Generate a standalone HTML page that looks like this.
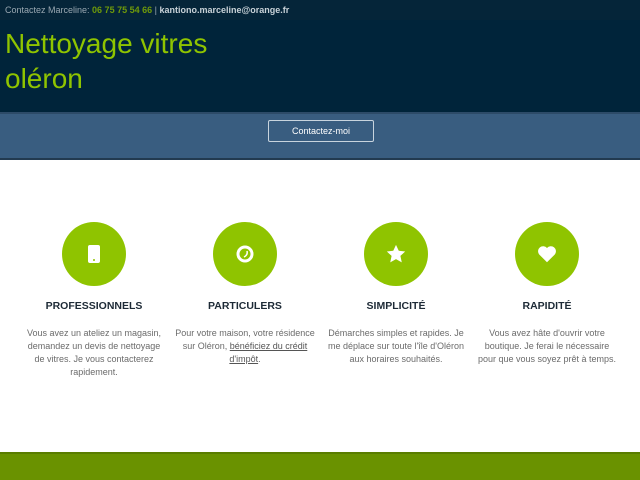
<!DOCTYPE html>
<html><head><meta charset="utf-8"><style>
*{margin:0;padding:0;box-sizing:border-box}
body{width:640px;height:480px;overflow:hidden;font-family:"Liberation Sans",sans-serif;background:#fff;position:relative}
.top{position:absolute;left:0;top:0;width:640px;height:20px;background:#052539;color:#9aa8b2;font-size:9px;line-height:20px;padding-left:5px}
.top b.g{color:#6f9a0a}.top b.w{color:#c9d2d8}
.hdr{position:absolute;left:0;top:20px;width:640px;height:92px;background:#00243a}
.hdr h1{font-weight:normal;color:#8fc400;font-size:28px;line-height:35px;padding:6px 0 0 5px}
.band{position:absolute;left:0;top:112px;width:640px;height:48px;background:#395d80;border-top:2px solid #2d4b68;border-bottom:2px solid #223a50}
.btn{position:absolute;left:268px;top:6px;width:106px;height:22px;border:1px solid #c8d4de;border-radius:2px;color:#fff;font-size:9px;text-align:center;line-height:20px}
.col{position:absolute;top:222px;width:150px;text-align:center}
.c{width:64px;height:64px;border-radius:50%;background:#8fc400;margin:0 auto;display:flex;align-items:center;justify-content:center}
.col h2{font-size:10.5px;color:#1d2a36;margin-top:14px;line-height:12px}
.col p{font-size:9px;color:#6b6b6b;line-height:13px;margin-top:15px;padding:0 5px}
.col p u{color:#555}
.foot{position:absolute;left:0;top:452px;width:640px;height:28px;background:#6a9200;border-top:2px solid #5a7d00}
</style></head><body>
<div class="top">Contactez Marceline: <b class="g">06 75 75 54 66</b> | <b class="w">kantiono.marceline@orange.fr</b></div>
<div class="hdr"><h1>Nettoyage vitres<br>oléron</h1></div>
<div class="band"><div class="btn">Contactez-moi</div></div>
<div class="col" style="left:19px"><div class="c"><svg width="20" height="20" viewBox="0 0 20 20"><rect x="4" y="1" width="12" height="18" rx="2" fill="#fff"/><circle cx="10" cy="16" r="1" fill="#8fc400"/></svg></div><h2>PROFESSIONNELS</h2><p>Vous avez un ateliez un magasin, demandez un devis de nettoyage de vitres. Je vous contacterez rapidement.</p></div>
<div class="col" style="left:170px"><div class="c"><svg width="20" height="20" viewBox="0 0 20 20"><circle cx="10" cy="10" r="7" fill="none" stroke="#fff" stroke-width="3"/><path d="M12 7 Q13 11 9 13" stroke="#fff" stroke-width="1.5" fill="none"/></svg></div><h2>PARTICULERS</h2><p>Pour votre maison, votre résidence sur Oléron, <u>bénéficiez du crédit d'impôt</u>.</p></div>
<div class="col" style="left:321px"><div class="c"><svg width="22" height="22" viewBox="0 0 24 24"><path d="M12 2l3 6.5 7 .8-5.2 4.8 1.5 7L12 17.6 5.7 21.1l1.5-7L2 9.3l7-.8z" fill="#fff"/></svg></div><h2>SIMPLICITÉ</h2><p>Démarches simples et rapides. Je me déplace sur toute l'île d'Oléron aux horaires souhaités.</p></div>
<div class="col" style="left:472px"><div class="c"><svg width="22" height="22" viewBox="0 0 24 24"><path d="M12 21L3.5 12.5A5 5 0 0 1 12 5.5a5 5 0 0 1 8.5 7z" fill="#fff"/></svg></div><h2>RAPIDITÉ</h2><p>Vous avez hâte d'ouvrir votre boutique. Je ferai le nécessaire pour que vous soyez prêt à temps.</p></div>
<div class="foot"></div>
</body></html>
